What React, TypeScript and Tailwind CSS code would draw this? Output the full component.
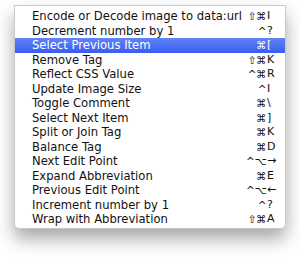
const items: { label: string; mods: string; key: string; active?: boolean }[] = [
  { label: "Encode or Decode image to data:url", mods: "⇧⌘", key: "I" },
  { label: "Decrement number by 1", mods: "^", key: "?" },
  { label: "Select Previous Item", mods: "⌘", key: "[", active: true },
  { label: "Remove Tag", mods: "⇧⌘", key: "K" },
  { label: "Reflect CSS Value", mods: "^⌘", key: "R" },
  { label: "Update Image Size", mods: "^", key: "I" },
  { label: "Toggle Comment", mods: "⌘", key: "\\" },
  { label: "Select Next Item", mods: "⌘", key: "]" },
  { label: "Split or Join Tag", mods: "⌘", key: "K" },
  { label: "Balance Tag", mods: "⌘", key: "D" },
  { label: "Next Edit Point", mods: "^⌥", key: "→" },
  { label: "Expand Abbreviation", mods: "⌘", key: "E" },
  { label: "Previous Edit Point", mods: "^⌥", key: "←" },
  { label: "Increment number by 1", mods: "^", key: "?" },
  { label: "Wrap with Abbreviation", mods: "⇧⌘", key: "A" },
];

export default function App() {
  return (
    <div className="w-[300px] h-[265px] bg-white pt-[5px] pl-[14px]">
      <div
        className="w-[272px] bg-white border border-[#c8c8c8] rounded-b-[5px] pt-[3px] pb-[1px] shadow-[0_10px_18px_rgba(0,0,0,0.35)] text-[11.6px] text-[#111]"
        style={{ fontFamily: '"DejaVu Sans", sans-serif' }}
      >
        {items.map((it) => (
          <div
            key={it.label}
            className={`flex items-center h-[14.5px] leading-[14px] pl-[17px] pr-[7px] ${
              it.active ? "bg-gradient-to-b from-[#6184f6] to-[#3a5cf0] text-white" : ""
            }`}
          >
            <span className="flex-1 whitespace-nowrap">{it.label}</span>
            <span className="text-right whitespace-nowrap pr-[1px] text-[10.5px] tracking-[-0.5px]">{it.mods}</span>
            <span className="w-[11px] whitespace-nowrap text-[11px]">{it.key}</span>
          </div>
        ))}
      </div>
    </div>
  );
}
